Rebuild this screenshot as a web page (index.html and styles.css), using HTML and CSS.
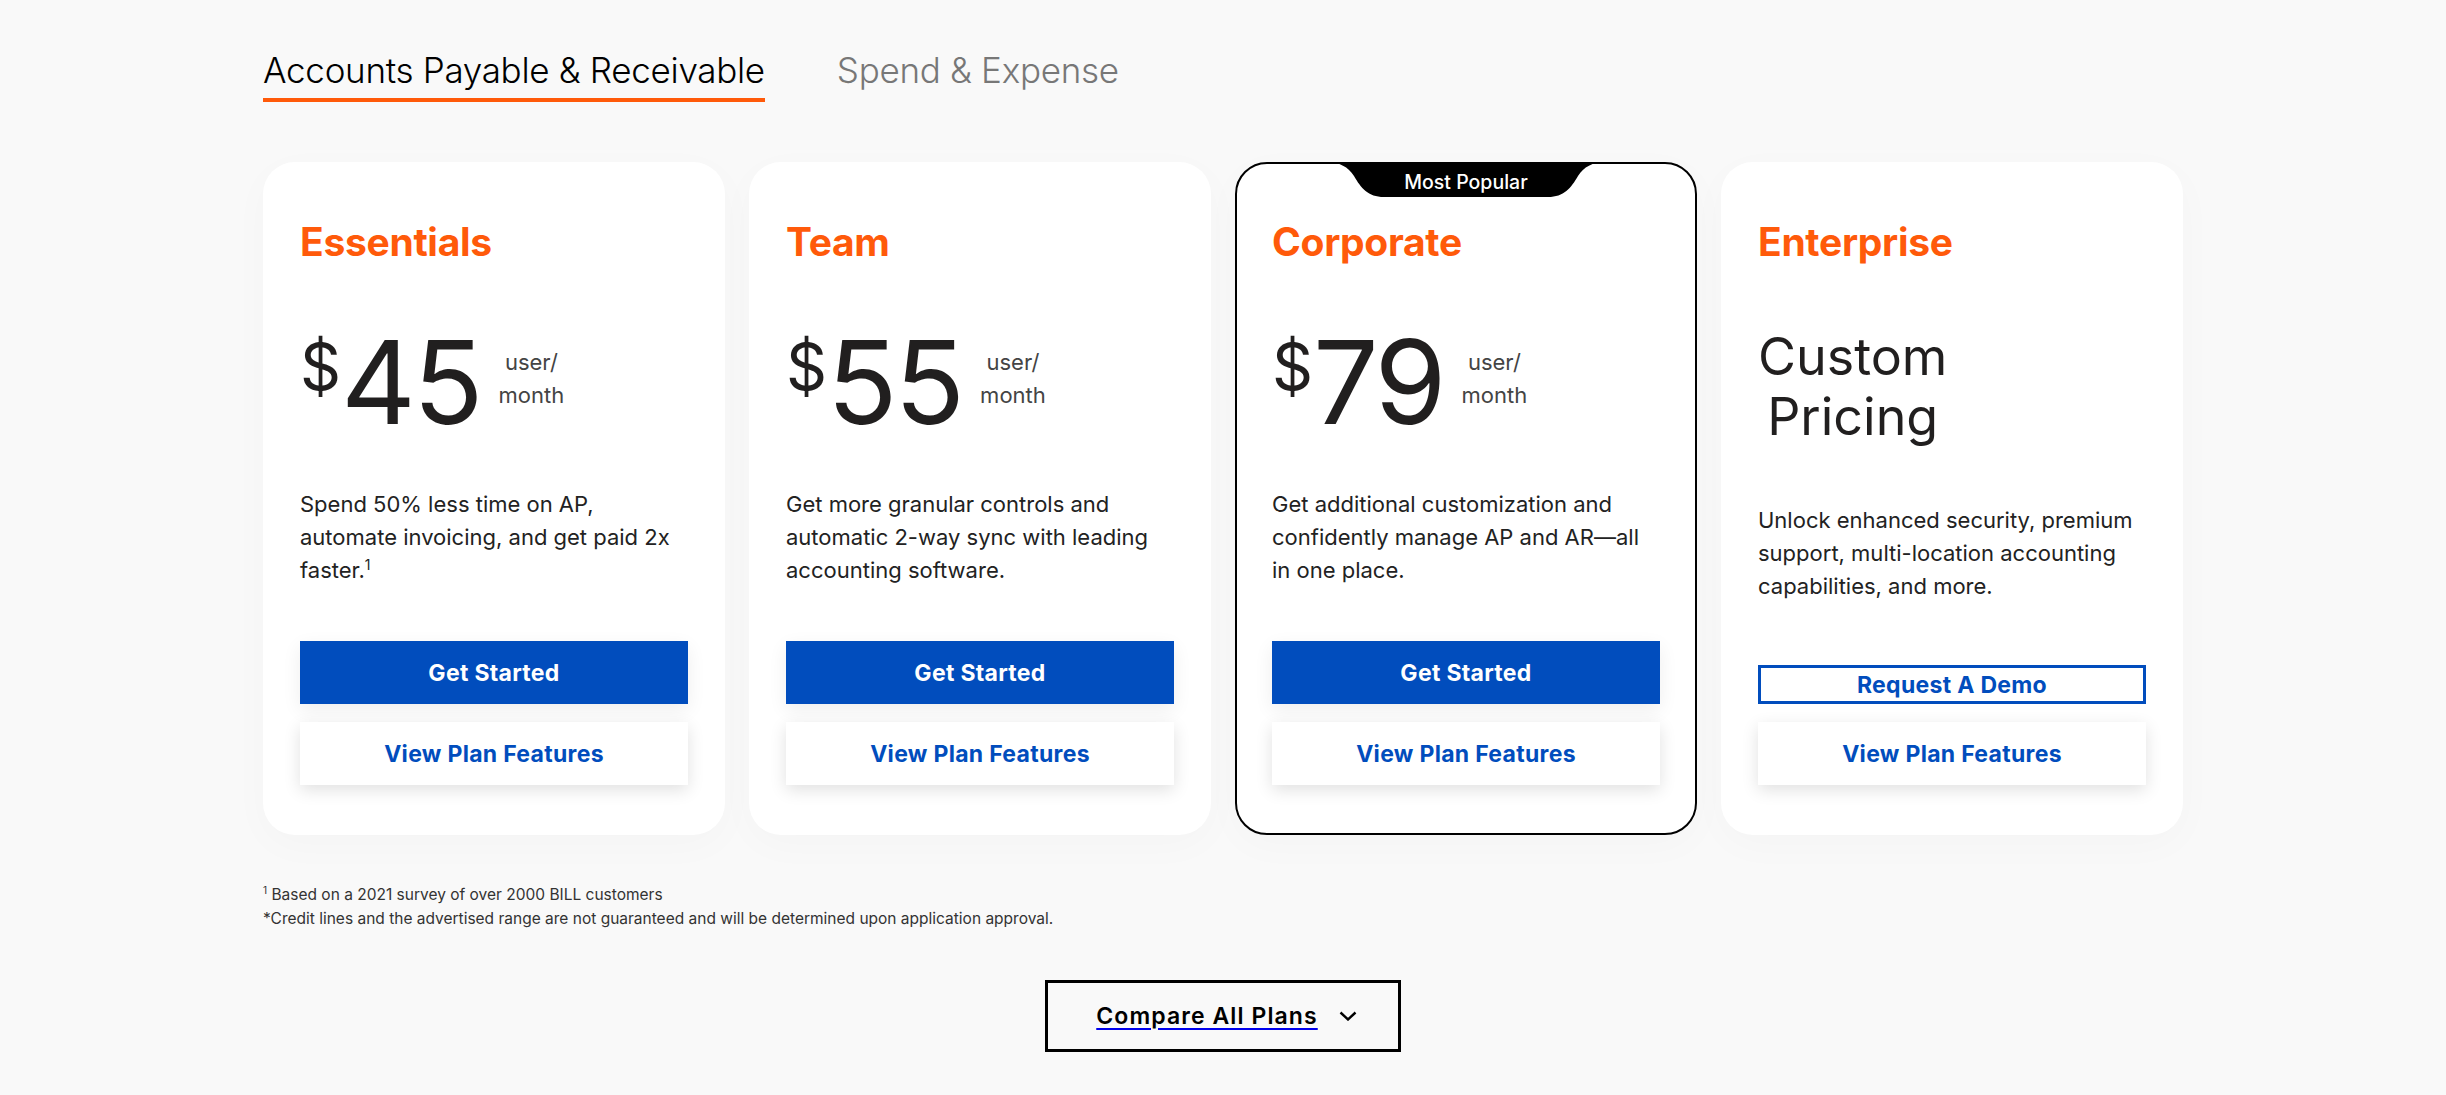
FILE: index.html
```html
<!DOCTYPE html>
<html lang="en">
  <head>
    <meta charset="UTF-8" />
    <meta name="viewport" content="width=device-width, initial-scale=1.0" />
    <title>Pricing</title>
    <link rel="stylesheet" href="styles.css">
  </head>
  <body>
    <main class="pricing">
      <!-- Product tabs -->
      <nav class="tabs">
        <a class="tab active" href="#">Accounts Payable &amp; Receivable</a>
        <a class="tab" href="#">Spend &amp; Expense</a>
      </nav>

      <div class="plans">
        <div class="plan">
          <h2 class="plan-name">Essentials</h2>
          <div class="price">
            <span class="currency">$</span>
            <span class="amount">45</span>
            <span class="per">user/<br>month</span>
          </div>
          <p class="desc">Spend 50% less time on AP, automate invoicing, and get paid 2x faster.<sup>1</sup></p>
          <div class="actions">
            <a class="btn btn-primary" href="#">Get Started</a>
            <a class="btn btn-features" href="#">View Plan Features</a>
          </div>
        </div>

        <div class="plan">
          <h2 class="plan-name">Team</h2>
          <div class="price">
            <span class="currency">$</span>
            <span class="amount">55</span>
            <span class="per">user/<br>month</span>
          </div>
          <p class="desc">Get more granular controls and automatic 2-way sync with leading accounting software.</p>
          <div class="actions">
            <a class="btn btn-primary" href="#">Get Started</a>
            <a class="btn btn-features" href="#">View Plan Features</a>
          </div>
        </div>

        <div class="plan popular">
          <div class="badge">
            <svg viewBox="0 0 280 36" width="280" height="36">
              <path d="M0 0 C14 0 22 5 28 14 C35 26 42 35 58 35 H222 C238 35 245 26 252 14 C258 5 266 0 280 0 Z" fill="#000" />
            </svg>
            <span>Most Popular</span>
          </div>
          <h2 class="plan-name">Corporate</h2>
          <div class="price">
            <span class="currency">$</span>
            <span class="amount">79</span>
            <span class="per">user/<br>month</span>
          </div>
          <p class="desc">Get additional customization and confidently manage AP and AR—all in one place.</p>
          <div class="actions">
            <a class="btn btn-primary" href="#">Get Started</a>
            <a class="btn btn-features" href="#">View Plan Features</a>
          </div>
        </div>

        <div class="plan">
          <h2 class="plan-name">Enterprise</h2>
          <div class="custom-price">Custom<br>Pricing</div>
          <p class="desc">Unlock enhanced security, premium support, multi-location accounting capabilities, and more.</p>
          <div class="actions">
            <a class="btn btn-outline" href="#">Request A Demo</a>
            <a class="btn btn-features" href="#">View Plan Features</a>
          </div>
        </div>
      </div>

      <div class="notes">
        <p><sup>1</sup> Based on a 2021 survey of over 2000 BILL customers</p>
        <p>*Credit lines and the advertised range are not guaranteed and will be determined upon application approval.</p>
      </div>

      <div class="compare">
        <a class="compare-btn" href="#">
          <span class="compare-label">Compare All Plans</span>
          <svg class="chevron" viewBox="0 0 18 10" width="18" height="10">
            <path d="M1.5 1.5 L9 8.5 L16.5 1.5" fill="none" stroke="#000" stroke-width="2.4" />
          </svg>
        </a>
      </div>
    </main>
  </body>
</html>
```

FILE: styles.css
```css
body {
  margin: 0;
  font-family: Inter, "Liberation Sans", sans-serif;
  background-color: #f9f9f9;
  color: #222;
}

.pricing {
  width: 1920px;
  margin: 0 auto;
  padding-top: 49px;
}

/* tabs */
.tabs {
  display: flex;
  gap: 72px;
}

.tab {
  font-size: 35px;
  font-weight: 300;
  line-height: 42px;
  color: #777;
  text-decoration: none;
  padding-bottom: 7px;
  border-bottom: 4px solid transparent;
  letter-spacing: -0.3px;
}

.tab.active {
  color: #000;
  border-bottom-color: #ff5a0a;
}

/* plan cards */
.plans {
  display: flex;
  gap: 24px;
  margin-top: 60px;
}

.plan {
  position: relative;
  flex: 1;
  display: flex;
  flex-direction: column;
  background-color: #fff;
  border: 2px solid transparent;
  border-radius: 32px;
  padding: 54px 35px 48px;
  box-shadow: 0 10px 40px rgba(0, 0, 0, 0.025);
}

.plan.popular {
  border-color: #000;
}

.badge {
  position: absolute;
  top: -2px;
  left: 50%;
  transform: translateX(-50%);
  width: 280px;
  height: 36px;
}

.badge svg {
  display: block;
}

.badge span {
  position: absolute;
  top: 8px;
  left: 0;
  right: 0;
  text-align: center;
  color: #fff;
  font-size: 19.5px;
  font-weight: 500;
  line-height: 24px;
}

.plan-name {
  margin: 0;
  font-size: 39px;
  font-weight: 700;
  line-height: 48px;
  color: #ff5a0a;
  letter-spacing: -0.3px;
}

.price {
  display: flex;
  align-items: center;
  margin-top: 58px;
  color: #211f1f;
}

.currency {
  align-self: flex-start;
  margin-top: 11px;
  font-size: 64px;
  line-height: 64px;
}

.amount {
  font-size: 116px;
  line-height: 116px;
  letter-spacing: -3px;
}

.per {
  margin-left: 18px;
  margin-bottom: 7px;
  font-size: 22px;
  line-height: 33px;
  text-align: center;
  color: #444;
}

.custom-price {
  align-self: flex-start;
  margin-top: 61px;
  font-size: 52px;
  line-height: 60px;
  text-align: center;
  color: #211f1f;
}

.desc {
  margin: 48px 0 54px;
  font-size: 22px;
  line-height: 33px;
  color: #222;
}

.custom-price + .desc {
  margin-top: 57px;
}

.desc sup {
  font-size: 14px;
  line-height: 0;
}

/* buttons */
.actions {
  margin-top: auto;
  display: flex;
  flex-direction: column;
  gap: 18px;
}

.btn {
  display: flex;
  justify-content: center;
  align-items: center;
  height: 63px;
  font-size: 23px;
  font-weight: 700;
  letter-spacing: 0.3px;
  text-decoration: none;
  box-sizing: border-box;
}

.btn-primary {
  background-color: #014dbd;
  color: white;
  box-shadow: 0 6px 18px rgba(0, 0, 0, 0.07);
}

.btn-features {
  background-color: white;
  color: #014dbd;
  box-shadow: 0 5px 16px rgba(0, 0, 0, 0.12);
}

.btn-outline {
  height: 39px;
  border: 3px solid #014dbd;
  color: #014dbd;
}

/* footnotes */
.notes {
  margin-top: 48px;
  font-size: 15.5px;
  line-height: 24px;
  color: #333;
}

.notes p {
  margin: 0;
}

.notes sup {
  font-size: 10px;
  line-height: 0;
}

/* compare */
.compare {
  display: flex;
  justify-content: center;
  margin-top: 49px;
}

.compare-btn {
  display: flex;
  align-items: center;
  gap: 21px;
  height: 72px;
  box-sizing: border-box;
  padding: 0 41px 0 48px;
  border: 3px solid #000;
  color: #000;
  text-decoration: none;
}

.compare-label {
  font-size: 23px;
  font-weight: 600;
  letter-spacing: 1.1px;
  text-decoration: underline;
  text-decoration-color: #0000ee;
  text-decoration-thickness: 2px;
  text-underline-offset: 4px;
}

.chevron {
  display: block;
}
```
